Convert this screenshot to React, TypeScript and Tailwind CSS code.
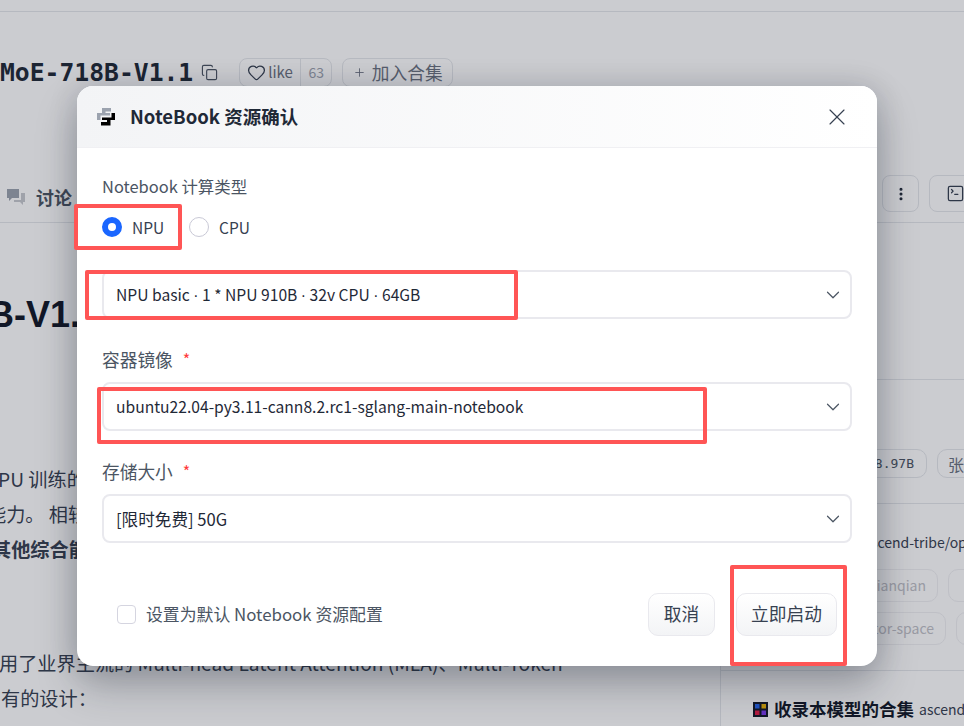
import { ChevronDown, Copy, Ellipsis, Heart, Plus, SquareTerminal, X } from "lucide-react";

const sans = { fontFamily: '"Noto Sans CJK SC", "Noto Sans", sans-serif' };

function Field({ label, value, required, valueClass = "text-[15.65px]" }: { label?: string; value: string; required?: boolean; valueClass?: string }) {
  const parts = value.split("·");
  return (
    <div>
      {label && (
        <div className="mb-[11px] flex h-[24px] items-center text-[17.7px] text-[#4b5563]">
          {label}
          {required && <span className="ml-[10px] text-[16px] text-[#ff3b3b]">*</span>}
        </div>
      )}
      <div className="flex h-[49px] items-center justify-between rounded-[8px] border-2 border-[#e9e9ee] bg-white pl-[12px] pr-[6px]">
        <span className={`${valueClass} whitespace-pre pt-[1px] text-[#1f2937]`}>
          {parts.map((part, i) => (
            <span key={i}>
              {i > 0 && <span className="[font-family:'Liberation_Sans',sans-serif]">·</span>}
              {part}
            </span>
          ))}
        </span>
        <ChevronDown className="h-[22px] w-[22px] text-[#4b5563]" strokeWidth={1.3} />
      </div>
    </div>
  );
}

function PythonLogo() {
  return (
    <svg width="18" height="18" viewBox="0 0 18 18">
      <path d="M5 0H14V3.5H8.5V5H13V7.5H3.5V12H0V5H5Z" fill="#9ca3af" />
      <path d="M18 5V12H13.5V17.5H4V14H10V12H5V9.5H14.5V5Z" fill="#000" />
    </svg>
  );
}

function Backdrop() {
  return (
    <div className="flex h-[726px] flex-col overflow-hidden bg-white text-[#374151]" style={sans}>
      <div className="h-[12px] shrink-0 border-b border-[#e5e7eb]" />

      <div className="mt-[46px] flex h-[29px] shrink-0 items-center">
        <h1 className="text-[24.7px] font-bold text-[#1f2937]" style={{ fontFamily: '"DejaVu Sans Mono", monospace' }}>
          MoE-718B-V1.1
        </h1>
        <Copy className="ml-[8px] h-[17px] w-[17px] text-[#4b5563]" strokeWidth={1.6} />
        <div className="ml-[21px] flex h-[29px] w-[93px] items-center rounded-[8px] border border-[#e5e7eb] text-[#6b7280]">
          <Heart className="ml-[7px] h-[19px] w-[19px] text-[#374151]" strokeWidth={1.6} />
          <span className="ml-[2px] w-[32px] text-[15px]">like</span>
          <span className="flex h-full flex-1 items-center justify-center border-l border-[#e5e7eb] text-[14px] text-[#9ca3af]">63</span>
        </div>
        <div className="ml-[10px] flex h-[29px] w-[111px] items-center justify-center gap-[6px] rounded-[8px] border border-[#e5e7eb] text-[17.7px] text-[#6b7280]">
          <Plus className="h-[13px] w-[13px]" strokeWidth={1.6} />
          加入合集
        </div>
      </div>

      <div className="mt-[85px] flex h-[51px] shrink-0 items-start border-b border-[#e5e7eb]">
        <svg className="ml-[6px] mt-[16px]" width="20" height="18" viewBox="0 0 20 18">
          <path d="M1 1h12v9H6l-3 3v-3H1z" fill="#9ca3af" />
          <path d="M15 5h4v9h-2v3l-3-3H8v-2h7z" fill="#c7c9cf" />
        </svg>
        <span className="ml-[10px] mt-[12px] text-[18px] font-bold text-[#4b5563]">讨论</span>
        <div className="ml-auto mt-[3px] flex items-center gap-[10px]">
          <div className="flex h-[37px] w-[37px] items-center justify-center rounded-[8px] border border-[#e5e7eb]">
            <Ellipsis className="h-[16px] w-[16px] rotate-90 text-[#1f2937]" strokeWidth={2.6} />
          </div>
          <div className="flex h-[37px] w-[45px] -mr-[10px] items-center rounded-[8px] border border-[#e5e7eb] pl-[16px]">
            <SquareTerminal className="h-[19px] w-[19px] text-[#374151]" strokeWidth={1.6} />
          </div>
        </div>
      </div>

      <div className="flex min-h-0 flex-1">
        <div className="w-[720px] shrink-0 overflow-hidden whitespace-nowrap">
          <div className="-ml-[12px] mt-[70px] text-[36px] leading-[44px] font-bold text-[#111827]" style={{ fontFamily: '"Liberation Sans", sans-serif' }}>
            B-V1.1
          </div>
          <div className="mt-[125px] text-[19.2px] leading-[35px]">
            <p className="-ml-[2px]">PU 训练的</p>
            <p className="-ml-[13px]">能力。 相较</p>
            <p className="-ml-[8px] font-bold">其他综合能</p>
            <p className="-ml-[1px] mt-[79px]">用了业界主流的 Multi-head Latent Attention (MLA)、Multi-Token</p>
            <p className="ml-[1px]">有的设计：</p>
          </div>
        </div>

        <div className="min-w-0 flex-1 overflow-hidden whitespace-nowrap border-l border-[#e5e7eb]">
          <div className="mt-[156px] border-b border-[#e5e7eb]" />
          <div className="ml-[125px] mt-[69px] flex h-[29px] gap-[10px] text-[14px] text-[#4b5563]">
            <span className="flex w-[81px] shrink-0 items-center justify-end rounded-[10px] border border-[#e5e7eb] pr-[12px]" style={{ fontFamily: '"DejaVu Sans Mono", monospace', fontSize: 13 }}>8.97B</span>
            <span className="flex w-[40px] shrink-0 items-center rounded-[10px] border border-[#e5e7eb] pl-[10px] text-[16px] text-[#6b7280]">张量</span>
          </div>
          <div className="mt-[25px] border-b border-[#e5e7eb]" />
          <div className="ml-[142px] mt-[27px] text-[14px] leading-[22px] text-[#374151]">ascend-tribe/open</div>
          <div className="ml-[120px] mt-[16px] flex h-[33px] gap-[10px] text-[14px] text-[#c0c1c7]">
            <span className="flex w-[97px] shrink-0 items-center justify-end rounded-[10px] border border-[#f0f0f3] pr-[11px]">jianqian</span>
            <span className="w-[40px] shrink-0 rounded-[10px] border border-[#f0f0f3]" />
          </div>
          <div className="ml-[120px] mt-[10px] flex h-[33px] gap-[10px] text-[14px] text-[#c0c1c7]">
            <span className="flex w-[105px] shrink-0 items-center justify-end rounded-[10px] border border-[#f0f0f3] pr-[11px]">tor-space</span>
            <span className="w-[40px] shrink-0 rounded-[10px] border border-[#f0f0f3]" />
          </div>
          <div className="mt-[25px] border-b border-[#e5e7eb]" />
          <div className="ml-[32px] mt-[26px] flex h-[24px] items-center">
            <svg width="15" height="15" viewBox="0 0 15 15" className="shrink-0">
              <rect width="15" height="15" fill="#111827" />
              <rect x="2" y="2" width="4.5" height="4.5" fill="#2563eb" />
              <rect x="8.5" y="2" width="4.5" height="4.5" fill="#eab308" />
              <rect x="2" y="8.5" width="4.5" height="4.5" fill="#e11d48" />
              <rect x="8.5" y="8.5" width="4.5" height="4.5" fill="#7c3aed" />
            </svg>
            <span className="ml-[6px] text-[17.5px] font-bold text-[#111827]">收录本模型的合集</span>
            <span className="ml-[5px] text-[14px] text-[#374151]">ascend-tribe</span>
          </div>
        </div>
      </div>
    </div>
  );
}

function Dialog() {
  return (
    <div className="flex h-[580px] w-[800px] flex-col overflow-hidden rounded-[16px] bg-white shadow-[0_20px_40px_rgba(17,24,39,0.28),0_0_30px_rgba(17,24,39,0.14)]" style={sans}>
      <div className="flex h-[62px] shrink-0 items-center border-b border-[#f0f0f3] bg-gradient-to-r from-[#f3f4f6] to-white pl-[20px] pr-[26px]">
        <PythonLogo />
        <span className="ml-[15px] text-[18.5px] font-bold text-[#1f2937]">NoteBook 资源确认</span>
        <X className="ml-auto h-[28px] w-[28px] text-[#374151]" strokeWidth={1} />
      </div>

      <div className="flex flex-1 flex-col px-[25px] pt-[26px]">
        <div className="flex h-[24px] items-center text-[16.45px] text-[#4b5563]">Notebook 计算类型</div>
        <div className="mt-[17px] flex h-[24px] items-center text-[15.5px] text-[#374151]">
          <span className="h-[20px] w-[20px] rounded-full border-[6px] border-[#1a66ff] bg-white" />
          <span className="ml-[10px] w-[57px] pt-[2px]">NPU</span>
          <span className="h-[20px] w-[20px] rounded-full border border-[#c9c9d6] bg-white" />
          <span className="ml-[10px] pt-[2px]">CPU</span>
        </div>
        <div className="mt-[31px] flex flex-col gap-[28px]">
          <Field value="NPU basic · 1 * NPU 910B · 32v CPU · 64GB" />
          <Field label="容器镜像" required value="ubuntu22.04-py3.11-cann8.2.rc1-sglang-main-notebook" />
          <Field label="存储大小" required value="[限时免费] 50G" valueClass="text-[16.6px]" />
        </div>
        <div className="mt-[50px] flex h-[43px] items-center pl-[15px] pr-[15px]">
          <span className="h-[19px] w-[19px] rounded-[4px] border border-[#d5d5e0] bg-white" />
          <span className="ml-[10px] pb-[2px] text-[16.85px] text-[#4b5563]">设置为默认 Notebook 资源配置</span>
          <button className="ml-auto h-[43px] w-[67px] rounded-[10px] border border-[#e9e9ee] bg-gradient-to-b from-white to-[#f3f4f6] pb-[2px] text-[17.7px] text-[#374151]">取消</button>
          <button className="ml-[21px] h-[43px] w-[101px] rounded-[10px] border border-[#e9e9ee] bg-gradient-to-b from-white to-[#f3f4f6] pb-[2px] text-[17.7px] text-[#374151]">立即启动</button>
        </div>
      </div>
    </div>
  );
}

export default function App() {
  return (
    <div className="relative h-[726px] w-[964px] overflow-hidden">
      <Backdrop />
      <div className="absolute inset-0 bg-[#111827]/[0.22] pl-[77px] pt-[86px]">
        <Dialog />
      </div>
      {/* red annotation boxes drawn over the screenshot */}
      <div className="absolute left-[74px] top-[204px] h-[46px] w-[108px] rounded-[2px] border-[4px] border-[#ff5555]" />
      <div className="absolute left-[85px] top-[270px] h-[50px] w-[433px] rounded-[2px] border-[4px] border-[#ff5555]" />
      <div className="absolute left-[97px] top-[387px] h-[57px] w-[610px] rounded-[2px] border-[4px] border-[#ff5555]" />
      <div className="absolute left-[730px] top-[565px] h-[101px] w-[117px] rounded-[2px] border-[4px] border-[#ff5555]" />
    </div>
  );
}
